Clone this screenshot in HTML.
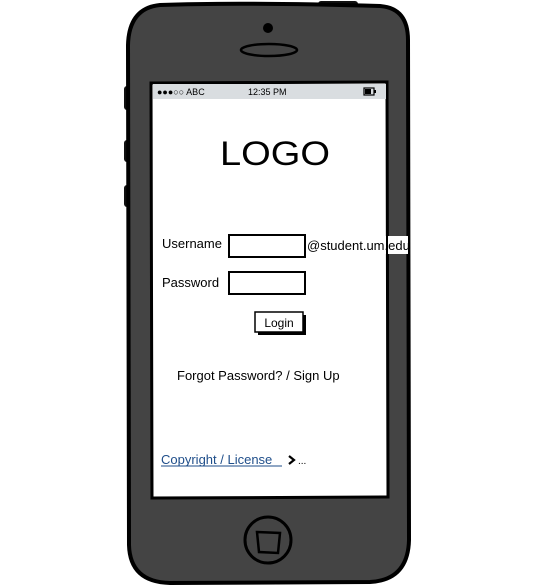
<!DOCTYPE html>
<html><head><meta charset="utf-8"><style>
html,body{margin:0;padding:0;background:#fff;}
svg{display:block}
text{font-family:"Liberation Sans",sans-serif;fill:#000}
</style></head><body>
<svg width="539" height="585" viewBox="0 0 539 585" xmlns="http://www.w3.org/2000/svg">
<rect x="124" y="86" width="8" height="24" rx="3" fill="#111"/>
<rect x="124" y="140" width="8" height="22" rx="3" fill="#111"/>
<rect x="124" y="185" width="8" height="22" rx="3" fill="#111"/>
<rect x="318" y="1" width="40" height="8" rx="3" fill="#111"/>
<path d="M160 5 Q240 2 380 6 Q408 8 408 40 L409 540 Q408 580 370 582 L170 583 Q130 582 129 545 L128 45 Q129 8 160 5 Z" fill="#444" stroke="#000" stroke-width="4"/>
<circle cx="268" cy="28" r="5" fill="#000"/>
<ellipse cx="269" cy="50" rx="28" ry="6" fill="none" stroke="#000" stroke-width="2.5"/>
<path d="M151 83 L387 82 L388 497 L152 498 Z" fill="#fff" stroke="#000" stroke-width="3"/>
<rect x="153" y="84" width="233" height="15" fill="#d9dde0"/>
<text x="157" y="95" font-size="9">●●●○○ ABC</text>
<text x="248" y="95" font-size="9">12:35 PM</text>
<rect x="364" y="88" width="10" height="7" fill="none" stroke="#000" stroke-width="1.2"/>
<rect x="365" y="89" width="6" height="5" fill="#000"/>
<rect x="374" y="90" width="2" height="3" fill="#000"/>
<text x="220" y="165" font-size="34" textLength="110" lengthAdjust="spacingAndGlyphs">LOGO</text>
<text x="162" y="248" font-size="13">Username</text>
<rect x="229" y="235" width="76" height="22" fill="#fff" stroke="#000" stroke-width="2"/>
<rect x="306" y="236" width="102" height="18" fill="#fff"/>
<text x="307" y="250" font-size="13">@student.um.edu</text>
<rect x="386" y="236" width="2" height="18" fill="#000"/>
<text x="162" y="287" font-size="13">Password</text>
<rect x="229" y="272" width="76" height="22" fill="#fff" stroke="#000" stroke-width="2"/>
<rect x="258" y="315" width="48" height="20" fill="#000"/>
<rect x="255" y="312" width="48" height="20" fill="#fff" stroke="#000" stroke-width="1.5"/>
<text x="279" y="327" font-size="12" text-anchor="middle">Login</text>
<text x="177" y="380" font-size="13">Forgot Password? / Sign Up</text>
<text x="161" y="464" font-size="13" style="fill:#1f4e8a">Copyright / License </text>
<line x1="161" y1="466" x2="282" y2="466" stroke="#1f4e8a" stroke-width="1"/>
<path d="M289 456 L294 460 L289 464" fill="none" stroke="#000" stroke-width="2.2"/>
<text x="298" y="464" font-size="10">...</text>
<circle cx="268" cy="540" r="23" fill="none" stroke="#000" stroke-width="3"/>
<path d="M257 532 L280 533 L278 553 L259 552 Z" fill="none" stroke="#000" stroke-width="2.5"/>
</svg>
</body></html>
